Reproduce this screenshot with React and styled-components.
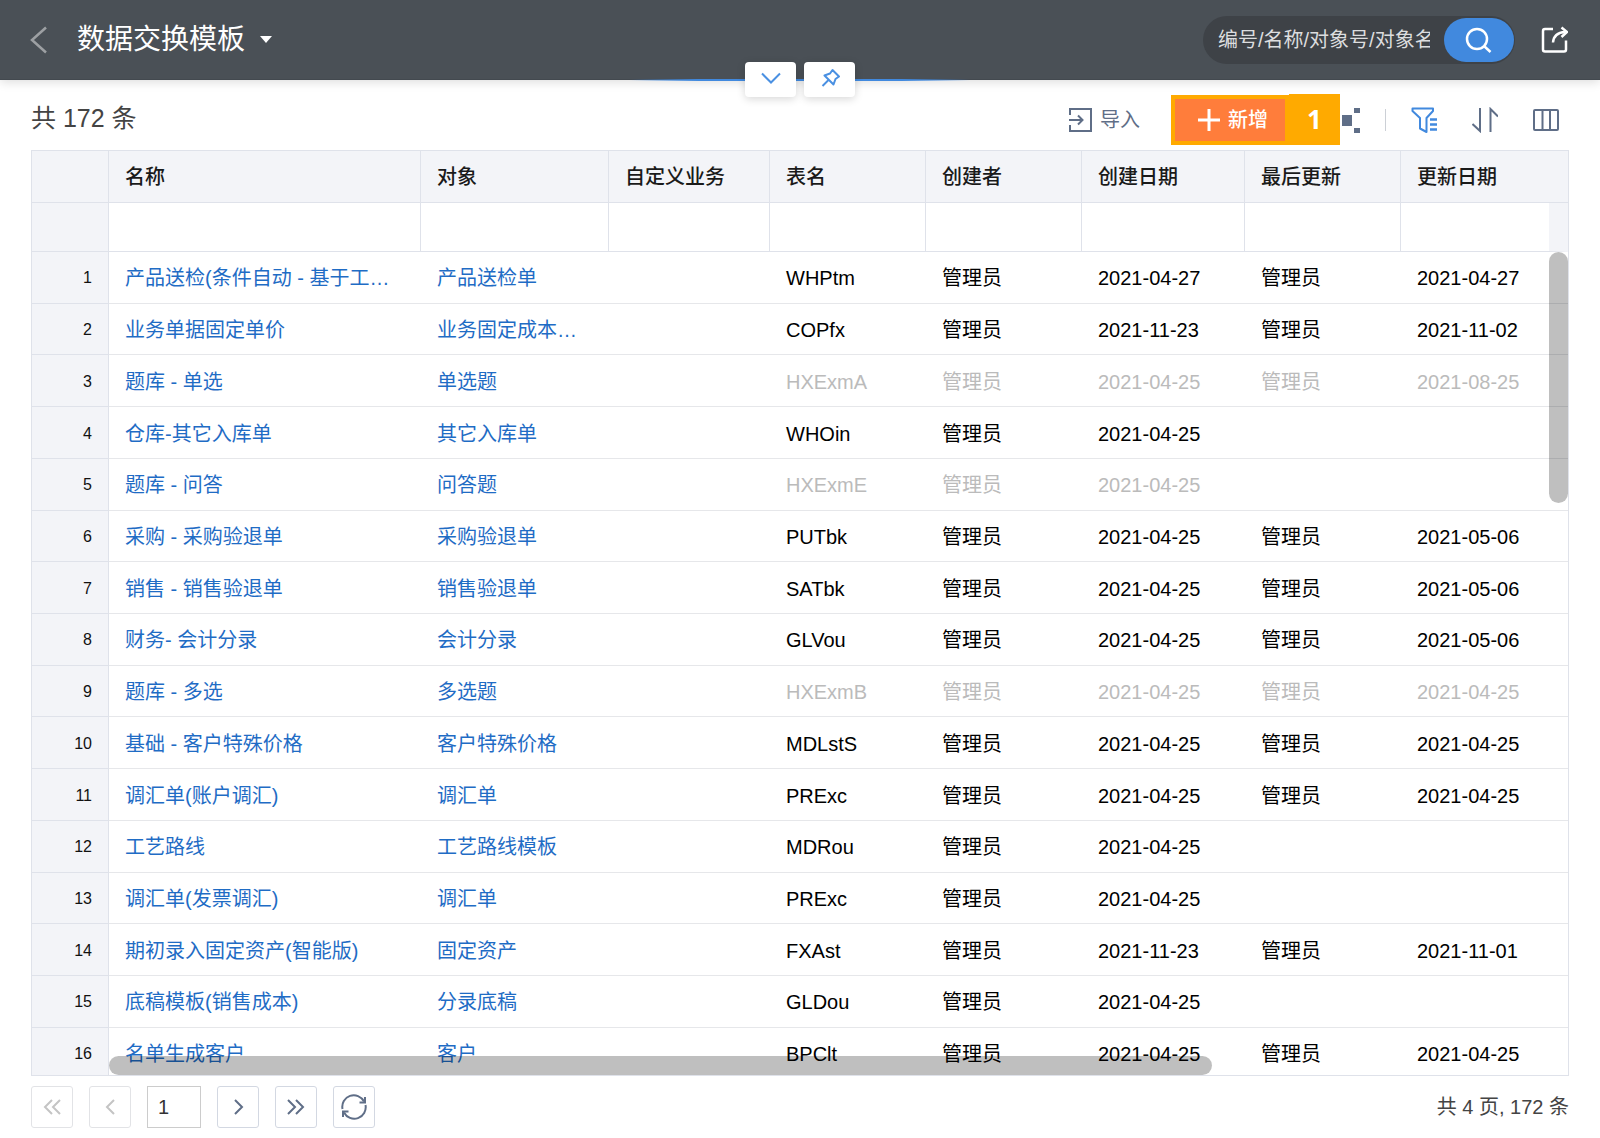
import React, { useState } from 'react';
import styled, { createGlobalStyle } from 'styled-components';

const columns = [
  { key: 'name', title: '名称', width: 312 },
  { key: 'target', title: '对象', width: 188 },
  { key: 'custom', title: '自定义业务', width: 161 },
  { key: 'table', title: '表名', width: 156 },
  { key: 'creator', title: '创建者', width: 156 },
  { key: 'created', title: '创建日期', width: 163 },
  { key: 'updater', title: '最后更新', width: 156 },
  { key: 'updated', title: '更新日期' },
];

const admin = '管理员';

const rows = [
  { name: '产品送检(条件自动 - 基于工…', target: '产品送检单', table: 'WHPtm', created: '2021-04-27', updated: '2021-04-27' },
  { name: '业务单据固定单价', target: '业务固定成本…', table: 'COPfx', created: '2021-11-23', updated: '2021-11-02' },
  { name: '题库 - 单选', target: '单选题', table: 'HXExmA', created: '2021-04-25', updated: '2021-08-25', disabled: true },
  { name: '仓库-其它入库单', target: '其它入库单', table: 'WHOin', created: '2021-04-25' },
  { name: '题库 - 问答', target: '问答题', table: 'HXExmE', created: '2021-04-25', disabled: true },
  { name: '采购 - 采购验退单', target: '采购验退单', table: 'PUTbk', created: '2021-04-25', updated: '2021-05-06' },
  { name: '销售 - 销售验退单', target: '销售验退单', table: 'SATbk', created: '2021-04-25', updated: '2021-05-06' },
  { name: '财务- 会计分录', target: '会计分录', table: 'GLVou', created: '2021-04-25', updated: '2021-05-06' },
  { name: '题库 - 多选', target: '多选题', table: 'HXExmB', created: '2021-04-25', updated: '2021-04-25', disabled: true },
  { name: '基础 - 客户特殊价格', target: '客户特殊价格', table: 'MDLstS', created: '2021-04-25', updated: '2021-04-25' },
  { name: '调汇单(账户调汇)', target: '调汇单', table: 'PRExc', created: '2021-04-25', updated: '2021-04-25' },
  { name: '工艺路线', target: '工艺路线模板', table: 'MDRou', created: '2021-04-25' },
  { name: '调汇单(发票调汇)', target: '调汇单', table: 'PRExc', created: '2021-04-25' },
  { name: '期初录入固定资产(智能版)', target: '固定资产', table: 'FXAst', created: '2021-11-23', updated: '2021-11-01' },
  { name: '底稿模板(销售成本)', target: '分录底稿', table: 'GLDou', created: '2021-04-25' },
  { name: '名单生成客户', target: '客户', table: 'BPClt', created: '2021-04-25', updated: '2021-04-25' },
];

const Icon = ({ size = 26, children, width = 2 }) => (
  <svg width={size} height={size} viewBox={`0 0 ${size} ${size}`} fill="none" stroke="currentColor" strokeWidth={width} aria-hidden="true">
    {children}
  </svg>
);

const App = () => {
  const [page, setPage] = useState('1');
  const [keyword, setKeyword] = useState('');

  return (
    <Page>
      <GlobalStyle />
      <Header>
        <BackButton aria-label="返回">
          <Icon size={28} width={2.5}><path d="M22 1.500 8 14l14 12.500" /></Icon>
        </BackButton>
        <TitleButton>
          数据交换模板
          <svg width="12" height="7" viewBox="0 0 12 7" fill="currentColor" aria-hidden="true"><path d="M0 0h12L6 7z" /></svg>
        </TitleButton>
        <SearchBox>
          <SearchInput
            aria-label="搜索"
            placeholder="编号/名称/对象号/对象名称"
            value={keyword}
            onChange={(e) => setKeyword(e.target.value)}
          />
          <SearchButton aria-label="查询">
            <Icon size={28} width={2.5}><circle cx="12" cy="13" r="10" /><path d="m19 20 6.500 6" /></Icon>
          </SearchButton>
        </SearchBox>
        <ShareButton aria-label="新窗口打开">
          <Icon size={28} width={2.5}>
            <path d="M13 3H5a2 2 0 0 0-2 2v18.500a2 2 0 0 0 2 2h19a2 2 0 0 0 2-2V14.500" />
            <path d="M13 16.500C13.500 10.500 17 6.500 25 6" />
            <path d="m21.500 1.500 5.500 4.500-5.500 5" />
          </Icon>
        </ShareButton>
        <HandleLine>
          <Handle aria-label="展开">
            <Icon size={20}><path d="m1 5.500 9 9 9-9" /></Icon>
          </Handle>
          <Handle aria-label="固定">
            <Icon size={20}>
              <path d="M12.500 2 19 8.500 15.500 11 13.500 16.500 4.500 7.500 10 5.500z" strokeLinejoin="round" />
              <path d="M8.500 12 2.500 18" />
            </Icon>
          </Handle>
        </HandleLine>
      </Header>

      <Toolbar>
        <Total>共 172 条</Total>
        <ImportButton>
          <Icon size={24}>
            <path d="M2 7V1h21v22H2v-6M1 12h13M10 7.500l4.500 4.500-4.500 4.500" />
          </Icon>
          导入
        </ImportButton>
        <Highlight>
          <NewButton>
            <Icon size={22} width={3}><path d="M11 0v22M0 11h22" /></Icon>
            新增
          </NewButton>
          <StepBadge>1</StepBadge>
        </Highlight>
        <ToolButton aria-label="流程">
          <Icon>
            <path d="M8 8h10v11H8zM20 1h6v5h-6zM20 21h6v5h-6zM0 1h6v5H0zM0 21h6v5H0z" fill="currentColor" stroke="none" />
          </Icon>
        </ToolButton>
        <Divider />
        <ToolButton $active aria-label="筛选">
          <Icon>
            <path d="M1.500 1.500H22v2.500L15.500 11v14l-6.500-3.500V11L1.500 4z" strokeLinejoin="round" />
            <path d="M19 12.500h7M19 17.500h7M19 22.500h7" strokeWidth="2.5" />
          </Icon>
        </ToolButton>
        <ToolButton aria-label="排序">
          <Icon>
            <path d="M8 1v23L.5 17M18.500 25V2l7.500 7.500" />
          </Icon>
        </ToolButton>
        <ToolButton aria-label="列设置">
          <Icon><rect x="1" y="3" width="24" height="20" rx="1" /><path d="M9.500 3v20M17 3v20" /></Icon>
        </ToolButton>
      </Toolbar>

      <GridFrame>
        <Table>
          <colgroup>
            <Col $width={77} />
            {columns.map((c) => <Col key={c.key} $width={c.width} />)}
          </colgroup>
          <thead>
            <HeadRow>
              <HeadCell aria-label="序号" />
              {columns.map((c) => <HeadCell key={c.key} scope="col">{c.title}</HeadCell>)}
            </HeadRow>
            <FilterRow>
              <NumberCell as="td" />
              {columns.map((c) => (
                <FilterCell key={c.key}>
                  <FilterInput aria-label={`筛选${c.title}`} />
                </FilterCell>
              ))}
            </FilterRow>
          </thead>
          <tbody>
            {rows.map((row, i) => (
              <tr key={i}>
                <NumberCell scope="row">{i + 1}</NumberCell>
                <Cell><CellLink href="#">{row.name}</CellLink></Cell>
                <Cell><CellLink href="#">{row.target}</CellLink></Cell>
                <Cell />
                <Cell $muted={row.disabled}>{row.table}</Cell>
                <Cell $muted={row.disabled}>{admin}</Cell>
                <Cell $muted={row.disabled}>{row.created}</Cell>
                <Cell $muted={row.disabled}>{row.updated && admin}</Cell>
                <Cell $muted={row.disabled}>{row.updated}</Cell>
              </tr>
            ))}
          </tbody>
        </Table>
        <VerticalTrack><VerticalThumb /></VerticalTrack>
        <HorizontalTrack><HorizontalThumb /></HorizontalTrack>
      </GridFrame>

      <Footer>
        <PageButton disabled aria-label="首页">
          <Icon size={20}><path d="M10 3 3 10l7 7M18 3l-7 7 7 7" /></Icon>
        </PageButton>
        <PageButton disabled aria-label="上一页">
          <Icon size={20}><path d="m14 3-7 7 7 7" /></Icon>
        </PageButton>
        <PageInput aria-label="页码" value={page} onChange={(e) => setPage(e.target.value)} />
        <PageButton aria-label="下一页">
          <Icon size={20}><path d="m7 3 7 7-7 7" /></Icon>
        </PageButton>
        <PageButton aria-label="末页">
          <Icon size={20}><path d="m2 3 7 7-7 7M10 3l7 7-7 7" /></Icon>
        </PageButton>
        <PageButton aria-label="刷新">
          <Icon>
            <path d="M1.500 15A11.500 11.500 0 0 1 23 7.500M24.500 11A11.500 11.500 0 0 1 3 18.500" />
            <path d="M24 3v5.500h-5.500M2 23v-5.500h5.500" />
          </Icon>
        </PageButton>
        <PageSummary>共 4 页, 172 条</PageSummary>
      </Footer>
    </Page>
  );
};

const GlobalStyle = createGlobalStyle`
  * {
    box-sizing: border-box;
  }

  body {
    margin: 0;
    background: #fff;
  }

  body, button, input {
    font-family: "Liberation Sans", "Noto Sans CJK SC", sans-serif;
    font-size: 20px;
    line-height: 28px;
  }

  button {
    border: 0;
    padding: 0;
    background: none;
    cursor: pointer;
  }

  svg {
    display: block;
    flex: none;
  }
`;

const Page = styled.div`
  display: flex;
  flex-direction: column;
  height: 100vh;
  min-height: 1000px;
`;

const Header = styled.header`
  position: relative;
  display: flex;
  align-items: center;
  flex: none;
  height: 80px;
  padding: 0 32px 0 24px;
  background: #4a5056;
  border-bottom: 1px solid #43494f;
  box-shadow: 0 2px 10px rgba(0, 0, 0, 0.14);
`;

const BackButton = styled.button`
  color: #9da0a3;
`;

const TitleButton = styled.button`
  display: flex;
  align-items: center;
  gap: 15px;
  margin-left: 25px;
  margin-right: auto;
  color: #fff;
  font-size: 28px;
  line-height: 40px;
`;

const SearchBox = styled.div`
  display: flex;
  align-items: center;
  width: 312px;
  height: 48px;
  padding: 2px 1px 2px 15px;
  border-radius: 24px;
  background: #3e4247;
`;

const SearchInput = styled.input`
  flex: 1;
  min-width: 0;
  margin-right: 14px;
  padding: 0;
  border: 0;
  outline: 0;
  background: none;
  color: #fff;

  &::placeholder {
    color: #dcdddf;
    opacity: 1;
  }
`;

const SearchButton = styled.button`
  display: flex;
  align-items: center;
  justify-content: center;
  width: 70px;
  height: 44px;
  border-radius: 22px;
  background: #4189de;
  color: #fff;
`;

const ShareButton = styled.button`
  margin-left: 25px;
  color: #fff;
`;

/* sits on the lower edge of the header */
const HandleLine = styled.div`
  position: absolute;
  left: 50%;
  top: 62px;
  display: flex;
  justify-content: center;
  gap: 8px;
  width: 340px;
  transform: translateX(-50%);
  background: linear-gradient(90deg, rgba(65, 137, 222, 0), #4189de 20%, #4189de 80%, rgba(65, 137, 222, 0)) 0 17px / 100% 2px no-repeat;
`;

const Handle = styled.button`
  display: flex;
  align-items: center;
  justify-content: center;
  width: 51px;
  height: 35px;
  padding-bottom: 4px;
  border-radius: 4px;
  background: #fff;
  color: #4a90e2;
  box-shadow: 0 2px 8px rgba(0, 0, 0, 0.16);
`;

const Toolbar = styled.div`
  display: flex;
  align-items: center;
  gap: 15px;
  flex: none;
  padding: 15px 31px 5px;
`;

const Total = styled.div`
  margin-right: auto;
  padding-bottom: 4px;
  color: #444;
  font-size: 25px;
  line-height: 36px;
`;

const ImportButton = styled.button`
  display: flex;
  align-items: center;
  gap: 8px;
  padding-right: 16px;
  color: #5f6e87;
`;

const Highlight = styled.div`
  position: relative;
  width: 118px;
  height: 50px;
  margin-right: 20px;
  border: 4px solid #ffaa00;
`;

const NewButton = styled.button`
  display: flex;
  align-items: center;
  gap: 8px;
  width: 100%;
  height: 100%;
  padding-left: 23px;
  background: #ff7d3b;
  color: #fff;
  font-weight: 500;
  white-space: nowrap;
`;

const StepBadge = styled.div`
  position: absolute;
  left: 114px;
  top: -5px;
  width: 51px;
  height: 51px;
  background: #ffaa00;
  color: #fff;
  font-family: "Open Sans", "Noto Sans", sans-serif;
  font-size: 26px;
  font-weight: 700;
  line-height: 51px;
  text-align: center;
`;

const ToolButton = styled.button`
  display: flex;
  align-items: center;
  justify-content: center;
  width: 46px;
  height: 46px;
  color: ${(p) => (p.$active ? '#4189de' : '#5f6e87')};
`;

const Divider = styled.span`
  width: 1px;
  height: 22px;
  background: #ccd0d6;
`;

const GridFrame = styled.div`
  position: relative;
  flex: 1;
  min-height: 0;
  margin: 0 31px;
  border: 1px solid #dfe2ea;
  overflow: hidden;
`;

/* a little taller than the frame, the last row runs under its edge */
const Table = styled.table`
  width: 100%;
  height: calc(100% + 3px);
  table-layout: fixed;
  border-collapse: separate;
  border-spacing: 0;
`;

const Col = styled.col`
  width: ${(p) => (p.$width ? `${p.$width}px` : 'auto')};
`;

const HeadRow = styled.tr`
  height: 52px;
`;

const FilterRow = styled.tr`
  height: 49px;
`;

const HeadCell = styled.th`
  padding: 0 16px;
  border-right: 1px solid #dfe2ea;
  border-bottom: 1px solid #dfe2ea;
  background: #f3f4f8;
  color: #1a1a1a;
  font-weight: 500;
  text-align: left;
  white-space: nowrap;

  &:last-child {
    border-right: 0;
  }
`;

const NumberCell = styled.th`
  padding: 2px 16px 0 0;
  border-right: 1px solid #dfe2ea;
  border-bottom: 1px solid #dfe2ea;
  background: #f3f4f8;
  color: #111;
  font-size: 16px;
  font-weight: 400;
  text-align: right;

  tbody tr:last-child & {
    border-bottom: 0;
  }
`;

const FilterCell = styled.td`
  padding: 0;
  border-right: 1px solid #dfe2ea;
  border-bottom: 1px solid #dfe2ea;

  &:last-child {
    border-right: 19px solid #f3f4f8;
  }
`;

const FilterInput = styled.input`
  display: block;
  width: 100%;
  height: 40px;
  padding: 0 16px;
  border: 0;
  outline: 0;
  background: none;
`;

const Cell = styled.td`
  padding: 2px 16px 0;
  border-bottom: 1px solid #e6e7ea;
  color: ${(p) => (p.$muted ? '#bbb' : '#000')};
  overflow: hidden;
  text-overflow: ellipsis;
  white-space: nowrap;

  tbody tr:last-child & {
    border-bottom: 0;
  }
`;

const CellLink = styled.a`
  color: #1f6cc5;
  text-decoration: none;
`;

const VerticalTrack = styled.div`
  position: absolute;
  top: 101px;
  right: 0;
  bottom: 0;
  width: 19px;
`;

const VerticalThumb = styled.div`
  height: 30.5%;
  border-radius: 10px;
  background: rgba(0, 0, 0, 0.25);
`;

const HorizontalTrack = styled.div`
  position: absolute;
  left: 77px;
  right: 0;
  bottom: 0;
  height: 19px;
`;

const HorizontalThumb = styled.div`
  width: 75.6%;
  height: 100%;
  border-radius: 10px;
  background: rgba(0, 0, 0, 0.25);
`;

const Footer = styled.footer`
  display: flex;
  align-items: center;
  gap: 16px;
  flex: none;
  padding: 10px 31px;
`;

const PageButton = styled.button`
  display: flex;
  align-items: center;
  justify-content: center;
  width: 42px;
  height: 42px;
  border: 1px solid #d3d8e2;
  border-radius: 3px;
  color: #5f6e87;

  &:disabled {
    border-color: #e2e3e6;
    color: #c4c4c4;
    cursor: default;
  }
`;

const PageInput = styled.input`
  width: 54px;
  height: 42px;
  padding: 0 10px;
  border: 1px solid #ccc;
  outline: 0;
  color: #333;
`;

const PageSummary = styled.div`
  margin-left: auto;
  color: #444;
`;

export default App;
